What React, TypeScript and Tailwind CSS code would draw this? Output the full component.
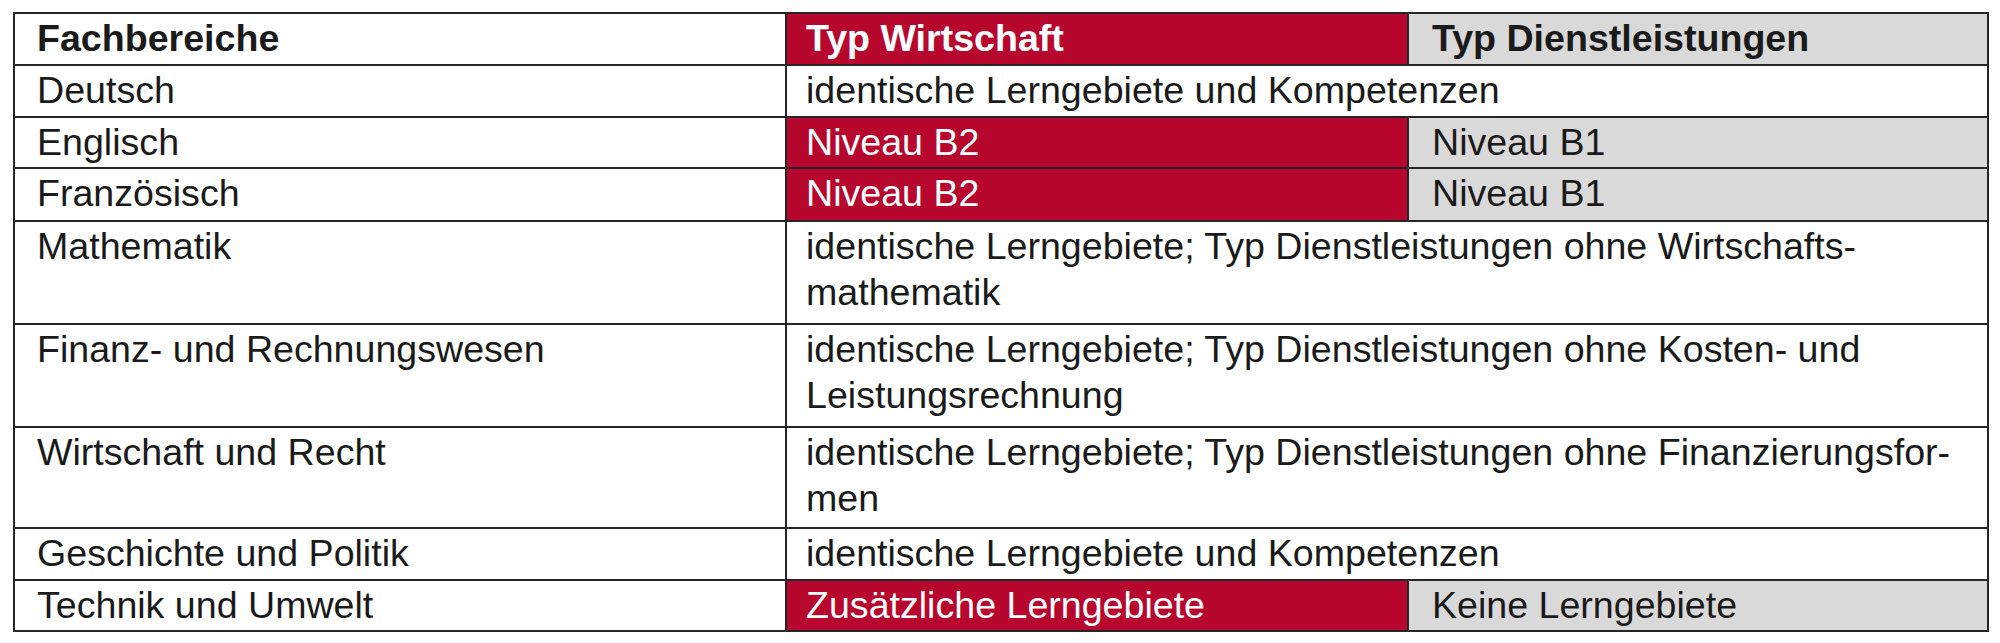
import React from "react";

const cell = "border-r-2 border-b-2 border-[#262626] pt-[1px] whitespace-nowrap overflow-hidden";
const c1 = `${cell} pl-[22px] bg-white text-[#1a1a1a]`;
const wide = `${cell} col-span-2 pl-[19px] bg-white text-[#1a1a1a]`;
const red = `${cell} pl-[19px] bg-[#b8072e] text-white`;
const grey = `${cell} pl-[23px] bg-[#d9d9d9] text-[#1a1a1a]`;

export default function App() {
  return (
    <div className="w-[2000px] h-[643px] bg-white pt-[12px] pl-[13px]" style={{ fontFamily: '"Liberation Sans", Arial, sans-serif' }}>
      <div className="grid grid-cols-[772px_622px_580px] grid-rows-[52px_52px_51px_53px_103px_103px_101px_52px_51px] w-fit border-t-2 border-l-2 border-[#262626] text-[37.6px] leading-[46px]">
        <div className={`${c1} font-bold`}>Fachbereiche</div>
        <div className={`${red} font-bold`}>Typ Wirtschaft</div>
        <div className={`${grey} font-bold`}>Typ Dienstleistungen</div>

        <div className={c1}>Deutsch</div>
        <div className={wide}>identische Lerngebiete und Kompetenzen</div>

        <div className={c1}>Englisch</div>
        <div className={red}>Niveau B2</div>
        <div className={grey}>Niveau B1</div>

        <div className={c1}>Französisch</div>
        <div className={red}>Niveau B2</div>
        <div className={grey}>Niveau B1</div>

        <div className={c1}>Mathematik</div>
        <div className={wide}>
          identische Lerngebiete; Typ Dienstleistungen ohne Wirtschafts-
          <br />
          mathematik
        </div>

        <div className={c1}>Finanz- und Rechnungswesen</div>
        <div className={wide}>
          identische Lerngebiete; Typ Dienstleistungen ohne Kosten- und
          <br />
          Leistungsrechnung
        </div>

        <div className={c1}>Wirtschaft und Recht</div>
        <div className={wide}>
          identische Lerngebiete; Typ Dienstleistungen ohne Finanzierungsfor-
          <br />
          men
        </div>

        <div className={c1}>Geschichte und Politik</div>
        <div className={wide}>identische Lerngebiete und Kompetenzen</div>

        <div className={c1}>Technik und Umwelt</div>
        <div className={red}>Zusätzliche Lerngebiete</div>
        <div className={grey}>Keine Lerngebiete</div>
      </div>
    </div>
  );
}
